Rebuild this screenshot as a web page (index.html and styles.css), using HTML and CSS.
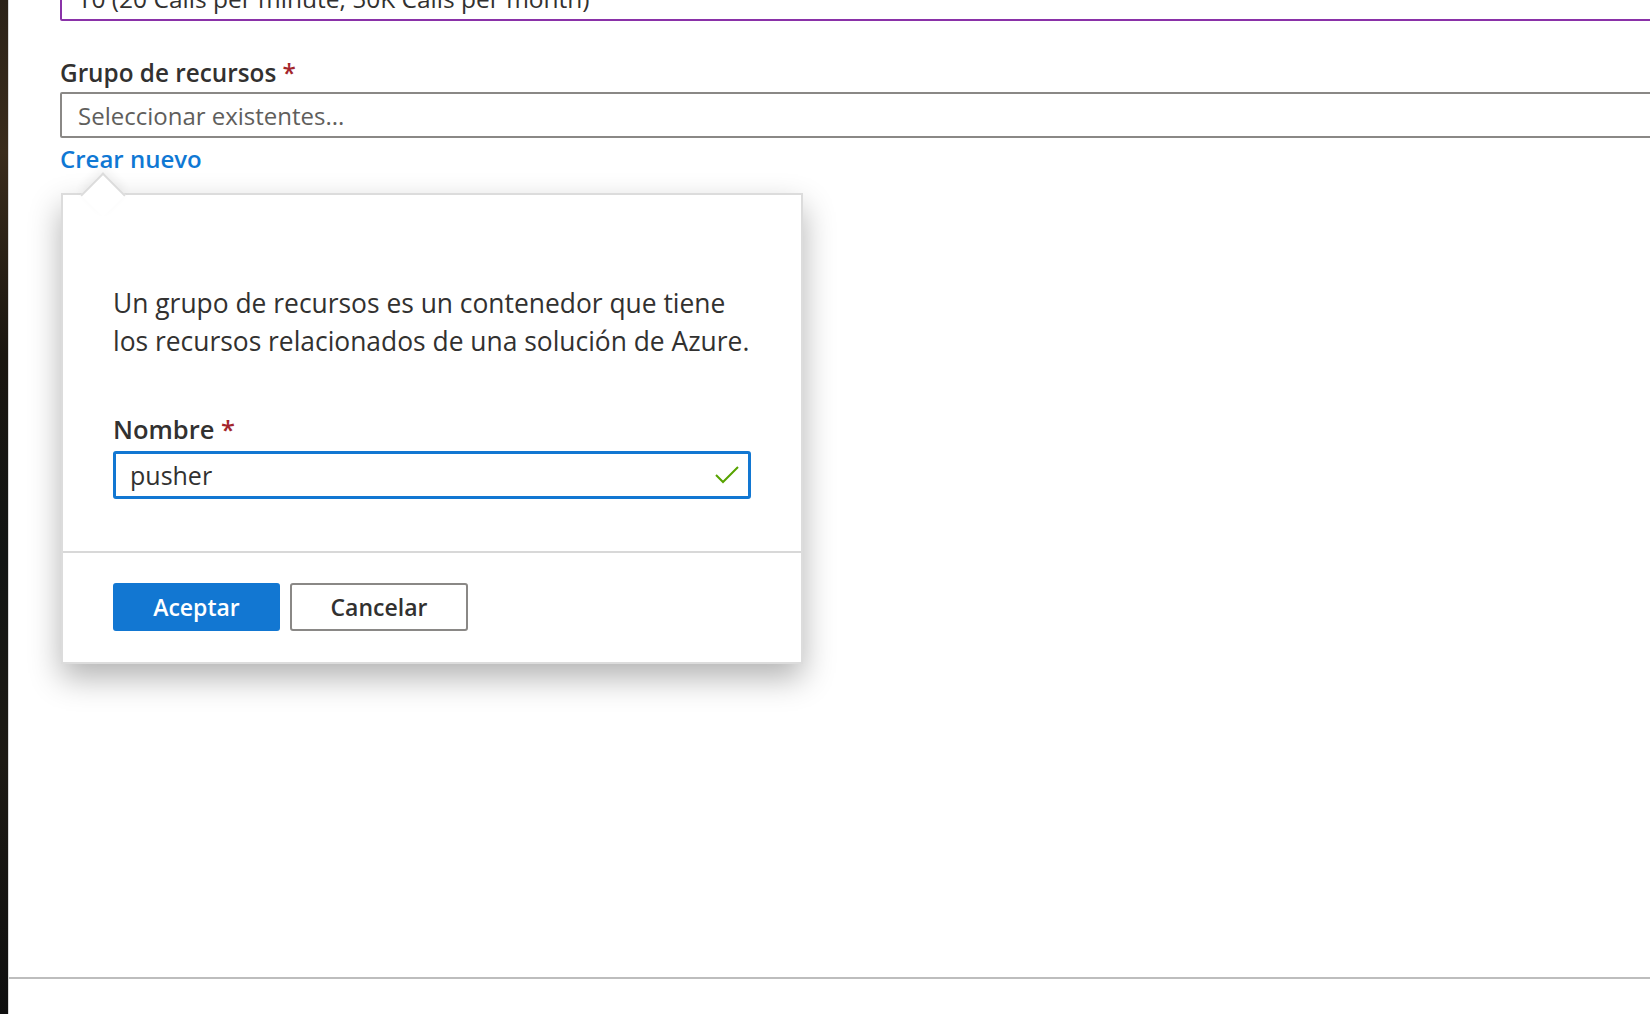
FILE: index.html
```html
<!DOCTYPE html>
<html lang="es">
<head>
    <meta charset="UTF-8">
    <title>Crear recurso - Grupo de recursos</title>
    <link rel="stylesheet" href="styles.css">
</head>
<body>

<div class="page">
    <div class="edge"></div>

    <div class="blade">
        <div class="form">
            <div class="field-box tier">T0 (20 Calls per minute, 50K Calls per month)</div>

            <div class="label">Grupo de recursos <span class="req">*</span></div>
            <div class="field-box select">Seleccionar existentes...</div>
            <a class="link" href="#">Crear nuevo</a>

            <div class="callout">
                <div class="beak"></div>
                <div class="callout-body">
                    <p class="desc">Un grupo de recursos es un contenedor que tiene<br>los recursos relacionados de una solución de Azure.</p>
                    <div class="label name-label">Nombre <span class="req">*</span></div>
                    <div class="name-input">
                        <span>pusher</span>
                        <svg class="ok" width="26" height="20" viewBox="0 0 26 20">
                            <path d="M2 10 L9 17 L24 2" fill="none" stroke="#57a300" stroke-width="2"/>
                        </svg>
                    </div>
                </div>
                <div class="callout-foot">
                    <button class="btn primary">Aceptar</button>
                    <button class="btn">Cancelar</button>
                </div>
            </div>
        </div>

        <div class="bottom-line"></div>
    </div>
</div>

</body>
</html>
```

FILE: styles.css
```css
body {
    margin: 0;
    padding: 0;
    background: white;
    font-family: "Open Sans", "Noto Sans", sans-serif;
    color: #323130;
    overflow: hidden;
}
.page {
    display: flex;
    height: 1014px;
}
.edge {
    width: 8px;
    background: linear-gradient(180deg, #2b2218 0%, #3a2c1c 15%, #1a1610 35%, #121514 55%, #1d1a14 75%, #0f0f0f 100%);
}
.blade {
    flex: 1;
    border-left: 1px solid #d9d9d9;
    display: flex;
    flex-direction: column;
    overflow: hidden;
}
.form {
    flex: 1;
    padding-left: 51px;
    width: 1700px;
}
.field-box {
    box-sizing: border-box;
    height: 46px;
    border: 2px solid #8a8886;
    border-radius: 2px;
    padding: 0 16px;
    display: flex;
    align-items: center;
    font-size: 24.5px;
}
.tier {
    margin-top: -25px;
    border-color: #8a32a8;
    color: #323130;
}
.select {
    color: #605e5c;
    font-size: 24px;
}
.label {
    font-size: 24.3px;
    font-weight: 600;
    margin-top: 35px;
    line-height: 34px;
    margin-bottom: 2px;
}
.req {
    color: #a4262c;
}
.link {
    display: block;
    margin-top: 4px;
    font-size: 24px;
    font-weight: 600;
    color: #0f78d4;
    text-decoration: none;
    line-height: 34px;
}
.callout {
    position: relative;
    margin-top: 17px;
    margin-left: 1px;
    width: 742px;
    box-sizing: border-box;
    background: white;
    border: 2px solid #dcdcdc;
    box-shadow: 0 14px 30px rgba(0, 0, 0, 0.3);
}
.beak {
    position: absolute;
    left: 24px;
    top: -16px;
    width: 30px;
    height: 30px;
    background: white;
    border-left: 2px solid #dcdcdc;
    border-top: 2px solid #dcdcdc;
    transform: rotate(45deg);
    box-shadow: -4px -4px 10px rgba(0, 0, 0, 0.06);
}
.callout-body {
    position: relative;
    padding: 89px 50px 52px 50px;
    border-bottom: 2px solid #d8d8d8;
}
.desc {
    margin: 0 -40px 0 0;
    font-size: 26.4px;
    line-height: 38px;
    white-space: nowrap;
}
.name-label {
    font-size: 25.5px;
    margin-top: 52px;
    margin-bottom: 5px;
}
.name-input {
    box-sizing: border-box;
    width: 638px;
    height: 48px;
    border: 3px solid #1277d2;
    border-radius: 3px;
    display: flex;
    align-items: center;
    justify-content: space-between;
    padding: 0 8px 0 14px;
    font-size: 25px;
}
.callout-foot {
    display: flex;
    gap: 10px;
    padding: 30px 50px 31px 50px;
}
.btn {
    height: 48px;
    width: 178px;
    background: white;
    border: 2px solid #8a8886;
    border-radius: 3px;
    font-family: "Open Sans", "Noto Sans", sans-serif;
    font-size: 23px;
    font-weight: 600;
    color: #323130;
    cursor: pointer;
}
.btn.primary {
    width: 167px;
    background: #1277d2;
    border-color: #1277d2;
    color: white;
}
.bottom-line {
    height: 2px;
    background: #bdbdbd;
    margin-bottom: 35px;
}
```
